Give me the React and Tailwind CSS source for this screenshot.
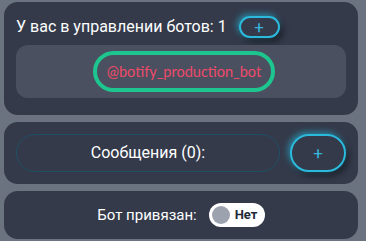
import React from 'react'

const font = { fontFamily: 'Roboto, "Liberation Sans", sans-serif' }

const GlowButton = ({ className }) => (
  <button
    className={`flex items-center justify-center rounded-full border-2 border-[#2bb9dc] bg-[#343a4a] text-[#36b4dc] shadow-[-2px_-2px_6px_rgba(34,200,238,0.55),3px_4px_6px_rgba(0,0,0,0.45)] ${className}`}
  >
    <span className="text-[17px] leading-none">+</span>
  </button>
)

const App = () => {
  return (
    <div
      className="flex h-[241px] w-[366px] flex-col gap-[7px] bg-[#6b7280] pl-[4px] pr-[8px] pt-[2px]"
      style={font}
    >
      {/* Bots card */}
      <div className="flex flex-col rounded-[14px] bg-[#343a4a] px-[12px] pb-[17px] pt-[14px]">
        <div className="flex h-[22px] items-center gap-[12px]">
          <span className="text-[16px] text-white">У вас в управлении ботов: 1</span>
          <GlowButton className="h-[22px] w-[41px]" />
        </div>
        <div className="mt-[7px] flex h-[53px] items-center justify-center rounded-[12px] bg-[#4a505f] pl-[6px]">
          <div className="flex h-[41px] w-[182px] items-center justify-center rounded-full border-[4px] border-[#1ec68f]">
            <span
              className="text-[14.5px] text-[#ef4a6a]"
              style={{ fontFamily: 'Lato, "Open Sans", sans-serif' }}
            >
              @botify_production_bot
            </span>
          </div>
        </div>
      </div>

      {/* Messages card */}
      <div className="flex items-center gap-[10px] rounded-[14px] bg-[#343a4a] px-[12px] py-[12px]">
        <div className="flex h-[38px] flex-1 items-center justify-center rounded-full border border-[#1f5064]">
          <span className="text-[16px] text-white">Сообщения (0):</span>
        </div>
        <GlowButton className="h-[38px] w-[56px]" />
      </div>

      {/* Bound card */}
      <div className="flex h-[48px] items-center justify-center gap-[12px] rounded-[14px] bg-[#343a4a]">
        <span className="text-[15px] text-white">Бот привязан:</span>
        <div className="flex h-[24px] w-[56px] items-center gap-[5px] rounded-full bg-white pl-[3px]">
          <span className="h-[18px] w-[18px] rounded-full bg-[#9ca3af]" />
          <span className="text-[13px] font-bold text-[#1f2937]">Нет</span>
        </div>
      </div>
    </div>
  )
}

export default App
